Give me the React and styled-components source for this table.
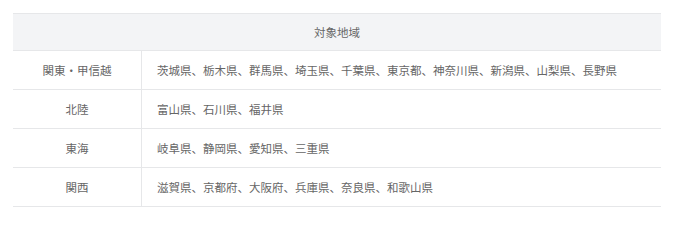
import React from 'react'
import styled, { createGlobalStyle } from 'styled-components'

const GlobalStyle = createGlobalStyle`
  body {
    margin: 0;
    background: #fff;
    font-family: "Noto Sans CJK JP", "Noto Sans", sans-serif;
  }
`

const Wrapper = styled.div`
  padding: 13px 19px 0 13px;
`

const Table = styled.table`
  width: 648px;
  border-collapse: collapse;
  font-size: 11.5px;
  color: #666;
`

const HeadCell = styled.th`
  height: 36px;
  padding: 0;
  background: #f3f4f6;
  border-top: 1px solid #e6e7e9;
  border-bottom: 1px solid #e6e7e9;
  font-weight: normal;
  text-align: center;
`

const RegionCell = styled.td`
  width: 128px;
  height: 38px;
  padding: 0;
  text-align: center;
  border-bottom: 1px solid #e6e7e9;
  border-right: 1px solid #e6e7e9;
`

const PrefCell = styled.td`
  height: 38px;
  padding: 0 0 0 15px;
  border-bottom: 1px solid #e6e7e9;
`

const rows = [
  { region: '関東・甲信越', prefs: '茨城県、栃木県、群馬県、埼玉県、千葉県、東京都、神奈川県、新潟県、山梨県、長野県' },
  { region: '北陸', prefs: '富山県、石川県、福井県' },
  { region: '東海', prefs: '岐阜県、静岡県、愛知県、三重県' },
  { region: '関西', prefs: '滋賀県、京都府、大阪府、兵庫県、奈良県、和歌山県' },
]

const App = () => {
  return (
    <Wrapper>
      <GlobalStyle />
      <Table>
        <thead>
          <tr>
            <HeadCell colSpan={2}>対象地域</HeadCell>
          </tr>
        </thead>
        <tbody>
          {rows.map((row) => (
            <tr key={row.region}>
              <RegionCell>{row.region}</RegionCell>
              <PrefCell>{row.prefs}</PrefCell>
            </tr>
          ))}
        </tbody>
      </Table>
    </Wrapper>
  )
}

export default App
